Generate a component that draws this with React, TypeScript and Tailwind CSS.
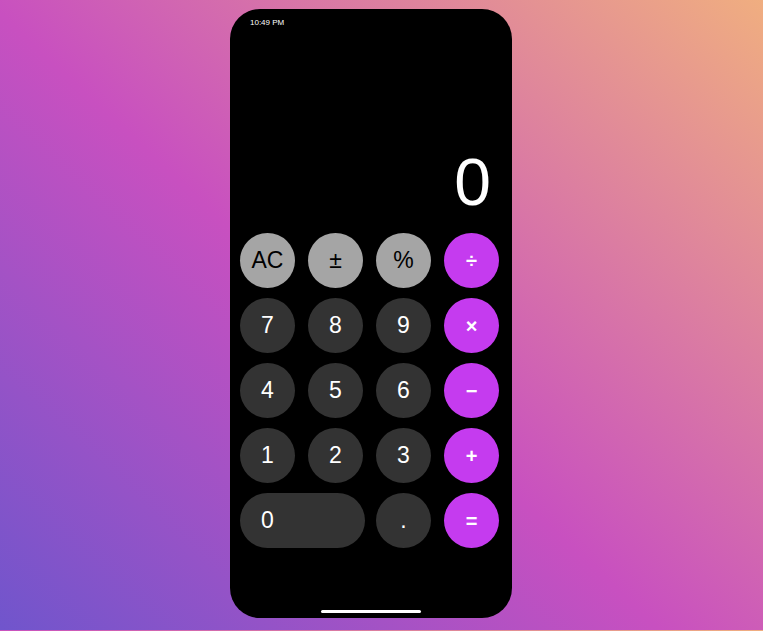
import React from "react";

type Kind = "gray" | "dark" | "op";

const keys: { label: string; kind: Kind; wide?: boolean }[] = [
  { label: "AC", kind: "gray" },
  { label: "±", kind: "gray" },
  { label: "%", kind: "gray" },
  { label: "÷", kind: "op" },
  { label: "7", kind: "dark" },
  { label: "8", kind: "dark" },
  { label: "9", kind: "dark" },
  { label: "×", kind: "op" },
  { label: "4", kind: "dark" },
  { label: "5", kind: "dark" },
  { label: "6", kind: "dark" },
  { label: "−", kind: "op" },
  { label: "1", kind: "dark" },
  { label: "2", kind: "dark" },
  { label: "3", kind: "dark" },
  { label: "+", kind: "op" },
  { label: "0", kind: "dark", wide: true },
  { label: ".", kind: "dark" },
  { label: "=", kind: "op" },
];

function Key({ label, kind, wide }: { label: string; kind: Kind; wide?: boolean }) {
  const color =
    kind === "gray"
      ? "bg-[#a5a5a5] text-black text-[23px]"
      : kind === "dark"
      ? "bg-[#333333] text-white text-[23px]"
      : "bg-[#c53bef] text-white text-[20px] font-bold";
  return (
    <button
      className={`h-[55px] rounded-full flex items-center leading-none ${color} ${
        wide ? "col-span-2 w-[125px] justify-start pl-[21px]" : "justify-center"
      }`}
    >
      {label}
    </button>
  );
}

export default function App() {
  return (
    <div
      className="w-full h-[631px] overflow-hidden pt-[9px] pl-[230px] bg-[linear-gradient(43deg,#7055cc_0%,#c850c0_46%,#f0ae80_100%)] bg-[size:100%_630px] bg-repeat"
      style={{ fontFamily: '"Liberation Sans", Arial, sans-serif' }}
    >
      <div className="w-[282px] h-[609px] bg-black rounded-[30px] flex flex-col overflow-hidden">
        <div className="pt-[10px] pl-[20px] text-[8px] leading-none text-white">10:49 PM</div>
        <div className="flex-1 flex items-end justify-end pr-[21px] mb-[18px]">
          <div className="text-[66px] leading-none text-white font-light">0</div>
        </div>
        <div className="grid grid-cols-[repeat(4,55px)] gap-x-[13px] gap-y-[10px] pl-[10px]">
          {keys.map((k) => (
            <Key key={k.label} {...k} />
          ))}
        </div>
        <div className="h-[70px] flex flex-col justify-end items-center pb-[5px]">
          <div className="w-[100px] h-[3px] rounded-full bg-white" />
        </div>
      </div>
    </div>
  );
}
